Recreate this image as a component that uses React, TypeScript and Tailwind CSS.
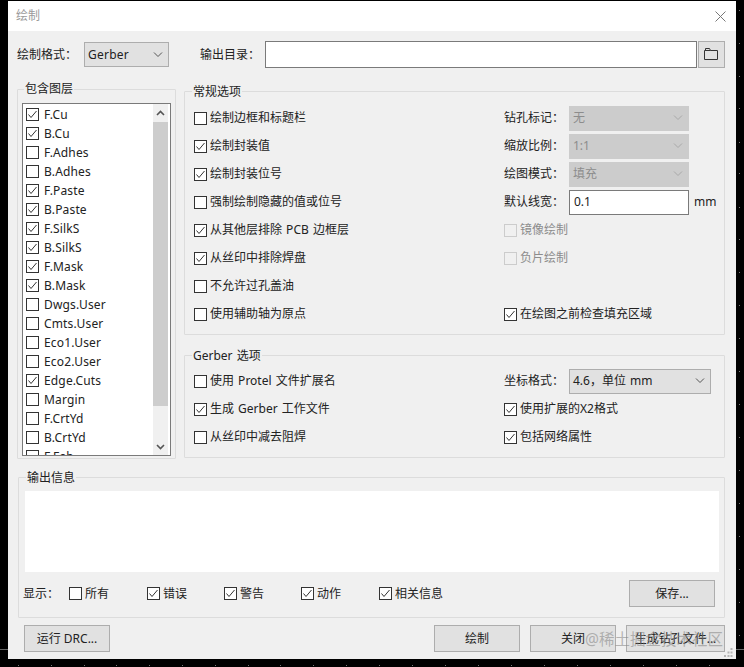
import type { ReactNode } from "react";

const layers = [
  { name: "F.Cu", on: true },
  { name: "B.Cu", on: true },
  { name: "F.Adhes", on: false },
  { name: "B.Adhes", on: false },
  { name: "F.Paste", on: true },
  { name: "B.Paste", on: true },
  { name: "F.SilkS", on: true },
  { name: "B.SilkS", on: true },
  { name: "F.Mask", on: true },
  { name: "B.Mask", on: true },
  { name: "Dwgs.User", on: false },
  { name: "Cmts.User", on: false },
  { name: "Eco1.User", on: false },
  { name: "Eco2.User", on: false },
  { name: "Edge.Cuts", on: true },
  { name: "Margin", on: false },
  { name: "F.CrtYd", on: false },
  { name: "B.CrtYd", on: false },
  { name: "F.Fab", on: false },
];

const sideDots = [10, 43, 76, 108, 142, 173, 207, 239, 272, 305, 338, 371, 404, 437, 470, 503, 536, 569, 602, 635];
const bottomDots = [18, 51, 84, 116, 149, 182, 215, 248, 280, 313, 346, 379, 412, 445, 478, 511, 544, 577, 610, 643, 676, 709];

const Box = ({ checked, disabled }: { checked?: boolean; disabled?: boolean }) => (
  <svg width="13" height="13" viewBox="0 0 13 13" className="shrink-0">
    <rect x="0.5" y="0.5" width="12" height="12" fill={disabled ? "#f0f0f0" : "#ffffff"} stroke={disabled ? "#cccccc" : "#333333"} />
    {checked && <polyline points="2.5,6.5 5,9.5 10.5,3" fill="none" stroke="#333333" strokeWidth="1" />}
  </svg>
);

const Check = ({ label, checked, disabled }: { label: string; checked?: boolean; disabled?: boolean }) => (
  <div className={`flex h-7 items-center gap-[3px] ${disabled ? "text-[#8c8c8c]" : ""}`}>
    <Box checked={checked} disabled={disabled} />
    <span>{label}</span>
  </div>
);

const Chevron = ({ color = "#555555" }: { color?: string }) => (
  <svg width="10" height="6" viewBox="0 0 10 6">
    <polyline points="1,0.5 5,4.5 9,0.5" fill="none" stroke={color} strokeWidth="1" />
  </svg>
);

const Combo = ({ value, disabled, width }: { value: string; disabled?: boolean; width: string }) => (
  <div
    className={`flex h-[25px] items-center justify-between border pl-[3px] pr-[5px] ${width} ${
      disabled ? "border-[#cccccc] bg-[#cccccc] text-[#8c8c8c]" : "border-[#adadad] bg-[#e1e1e1]"
    }`}
  >
    <span>{value}</span>
    <Chevron color={disabled ? "#a8a8a8" : "#555555"} />
  </div>
);

const Labeled = ({ label, children }: { label: string; children: ReactNode }) => (
  <div className="flex h-7 items-center">
    <span className="w-[65px]">{label}</span>
    {children}
  </div>
);

const Group = ({
  title,
  className,
  titleClass = "left-[7px] -top-[9px]",
  children,
}: {
  title: string;
  className: string;
  titleClass?: string;
  children: ReactNode;
}) => (
  <div className={`relative rounded-[1px] border border-[#dcdcdc] ${className}`}>
    <span className={`absolute bg-[#f0f0f0] px-px leading-[16px] ${titleClass}`}>{title}</span>
    {children}
  </div>
);

const Button = ({ label, className = "w-[86px]" }: { label: string; className?: string }) => (
  <button className={`h-[27px] border border-[#adadad] bg-[#e1e1e1] ${className}`}>{label}</button>
);

const App = () => {
  return (
    <div className="relative flex h-[667px] w-[744px] flex-col overflow-hidden bg-black px-2 pb-2 pt-px font-['Noto_Sans','Noto_Sans_CJK_SC',sans-serif] text-[12px] text-[#222222] [word-spacing:1px]">
      {/* background marks behind the dialog */}
      {sideDots.map((y) => (
        <div key={y} className="absolute left-[739px] h-px w-px bg-[#777777]" style={{ top: y }} />
      ))}
      {bottomDots.map((x) => (
        <div key={x} className="absolute top-[665px] h-px w-px bg-[#777777]" style={{ left: x }} />
      ))}
      <div className="absolute left-0 top-[649px] h-px w-2 bg-[#666666]" />
      <div className="absolute left-[736px] top-[649px] h-px w-2 bg-[#666666]" />

      {/* dialog */}
      <div className="relative flex flex-1 flex-col bg-[#f0f0f0]">
        {/* title bar */}
        <div className="flex h-[30px] items-center justify-between bg-white pl-2 pr-[10px] text-[#9a9a9a]">
          <span>绘制</span>
          <svg width="11" height="11" viewBox="0 0 11 11">
            <path d="M0.5 0.5 L10.5 10.5 M10.5 0.5 L0.5 10.5" stroke="#777777" strokeWidth="1" />
          </svg>
        </div>

        <div className="flex flex-col pl-[9px] pr-[11px]">
          {/* format and output dir */}
          <div className="mt-[10px] flex h-[27px] items-center">
            <span className="w-[67px]">绘制格式：</span>
            <Combo value="Gerber" width="w-[85px] tracking-[0.25px]" />
            <span className="ml-[31px] w-[65px]">输出目录：</span>
            <div className="h-[27px] w-[432px] border border-[#7a7a7a] bg-white" />
            <button className="ml-px flex h-[27px] w-[27px] items-center justify-center border border-[#adadad] bg-[#e1e1e1]">
              <svg width="15" height="13" viewBox="0 0 15 13">
                <path d="M1.5 2.5 V0.5 H5.5 L6.5 2.5 H13.5 V11.5 H0.5 V2.5 H6.5" fill="none" stroke="#333333" strokeWidth="1" />
              </svg>
            </button>
          </div>

          <div className="mt-[21px] flex gap-2">
            {/* layers */}
            <Group title="包含图层" titleClass="left-[6px] -top-[9px]" className="h-[370px] w-[159px] shrink-0 pl-1 pt-[13px]">
              <div className="flex h-[353px] w-[149px] border border-[#7a7a7a] bg-white">
                <div className="flex-1 overflow-hidden pl-[3px] pt-px tracking-[0.15px]">
                  {layers.map((layer) => (
                    <div key={layer.name} className="flex h-[19px] items-center gap-[5px]">
                      <Box checked={layer.on} />
                      <span>{layer.name}</span>
                    </div>
                  ))}
                </div>
                <div className="mr-[2px] flex w-[15px] flex-col items-center bg-[#f0f0f0]">
                  <div className="flex h-[18px] items-center">
                    <svg width="9" height="6" viewBox="0 0 9 6">
                      <polyline points="1,5 4.5,1.5 8,5" fill="none" stroke="#555555" strokeWidth="1.6" />
                    </svg>
                  </div>
                  <div className="h-[284px] w-full bg-[#cdcdcd]" />
                  <div className="flex flex-1 items-end justify-center pb-[5px]">
                    <svg width="9" height="6" viewBox="0 0 9 6">
                      <polyline points="1,1 4.5,4.5 8,1" fill="none" stroke="#555555" strokeWidth="1.6" />
                    </svg>
                  </div>
                </div>
              </div>
            </Group>

            <div className="mt-[2px] flex flex-1 flex-col gap-5">
              {/* general options */}
              <Group title="常规选项" titleClass="left-[7px] -top-[8px]" className="h-[244px] pl-[9px] pt-3">
                <div className="flex">
                  <div className="w-[310px]">
                    <Check label="绘制边框和标题栏" />
                    <Check label="绘制封装值" checked />
                    <Check label="绘制封装位号" checked />
                    <Check label="强制绘制隐藏的值或位号" />
                    <Check label="从其他层排除 PCB 边框层" checked />
                    <Check label="从丝印中排除焊盘" checked />
                    <Check label="不允许过孔盖油" />
                    <Check label="使用辅助轴为原点" />
                  </div>
                  <div className="flex-1">
                    <Labeled label="钻孔标记：">
                      <Combo value="无" disabled width="w-[120px]" />
                    </Labeled>
                    <Labeled label="缩放比例：">
                      <Combo value="1:1" disabled width="w-[120px]" />
                    </Labeled>
                    <Labeled label="绘图模式：">
                      <Combo value="填充" disabled width="w-[120px]" />
                    </Labeled>
                    <Labeled label="默认线宽：">
                      <div className="flex h-[25px] w-[120px] items-center border border-[#7a7a7a] bg-white pl-[4px]">0.1</div>
                      <span className="ml-[5px]">mm</span>
                    </Labeled>
                    <Check label="镜像绘制" disabled />
                    <Check label="负片绘制" disabled />
                    <div className="h-7" />
                    <Check label="在绘图之前检查填充区域" checked />
                  </div>
                </div>
              </Group>

              {/* gerber options */}
              <Group title="Gerber 选项" titleClass="left-[7px] -top-[8px]" className="h-[103px] pl-[9px] pt-[11px]">
                <div className="flex">
                  <div className="w-[310px]">
                    <Check label="使用 Protel 文件扩展名" />
                    <Check label="生成 Gerber 工作文件" checked />
                    <Check label="从丝印中减去阻焊" />
                  </div>
                  <div className="flex-1">
                    <Labeled label="坐标格式：">
                      <Combo value="4.6，单位 mm" width="w-[142px]" />
                    </Labeled>
                    <Check label="使用扩展的X2格式" checked />
                    <Check label="包括网络属性" checked />
                  </div>
                </div>
              </Group>
            </div>
          </div>

          {/* output messages */}
          <Group title="输出信息" titleClass="left-[7px] -top-[8px]" className="ml-px mt-[18px] h-[141px] px-[6px] pt-[13px]">
            <div className="h-[81px] w-[694px] bg-white" />
            <div className="-ml-px mt-[8px] flex h-[27px] items-center">
              <span className="-ml-px w-[46px]">显示：</span>
              <div className="flex w-[78px] items-center gap-[3px]"><Box /><span>所有</span></div>
              <div className="flex w-[77px] items-center gap-[3px]"><Box checked /><span>错误</span></div>
              <div className="flex w-[77px] items-center gap-[3px]"><Box checked /><span>警告</span></div>
              <div className="flex w-[78px] items-center gap-[3px]"><Box checked /><span>动作</span></div>
              <div className="flex items-center gap-[3px]"><Box checked /><span>相关信息</span></div>
              <Button label="保存..." className="ml-auto mr-[3px] w-[86px]" />
            </div>
          </Group>

          {/* bottom buttons */}
          <div className="ml-[7px] mt-[7px] flex">
            <Button label="运行 DRC..." />
            <Button label="绘制" className="ml-auto w-[86px]" />
            <Button label="关闭" className="ml-[10px] w-[86px]" />
            <Button label="生成钻孔文件..." className="ml-[10px] w-[99px]" />
          </div>
        </div>

        {/* size grip */}
        <svg width="9" height="9" viewBox="0 0 9 9" className="absolute bottom-[2px] right-[3px]">
          <g fill="#b5b5b5">
            <rect x="6.5" y="0" width="2" height="2" />
            <rect x="3.5" y="3.5" width="2" height="2" />
            <rect x="6.5" y="3.5" width="2" height="2" />
            <rect x="0" y="7" width="2" height="2" />
            <rect x="3.5" y="7" width="2" height="2" />
            <rect x="6.5" y="7" width="2" height="2" />
          </g>
        </svg>
      </div>

      {/* watermark */}
      <span className="absolute left-[585px] top-[629px] text-[15.5px] leading-[20px] text-[#8a8a8a]/60">@稀土掘金技术社区</span>
    </div>
  );
};

export default App;
